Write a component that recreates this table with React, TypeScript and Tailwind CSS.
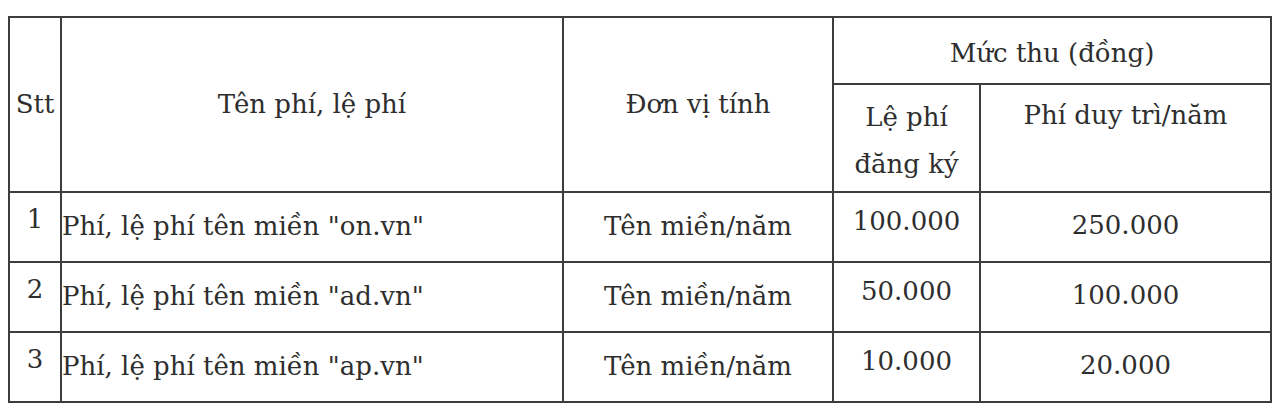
const rows = [
  { stt: '1', ten: 'Phí, lệ phí tên miền "on.vn"', dangKy: '100.000', duyTri: '250.000' },
  { stt: '2', ten: 'Phí, lệ phí tên miền "ad.vn"', dangKy: '50.000', duyTri: '100.000' },
  { stt: '3', ten: 'Phí, lệ phí tên miền "ap.vn"', dangKy: '10.000', duyTri: '20.000' },
]

const cell = 'border-2 border-[#3d3d3d] p-0'

export default function App() {
  return (
    <div
      className="min-h-[411px] bg-white pl-[8px] pt-[16px] text-[26px] leading-[47px] text-[#2e2e2e]"
      style={{ fontFamily: '"DejaVu Serif", serif' }}
    >
      <table className="w-[1264px] table-fixed border-collapse">
        <colgroup>
          <col className="w-[52px]" />
          <col className="w-[502px]" />
          <col className="w-[270px]" />
          <col className="w-[147px]" />
          <col className="w-[291px]" />
        </colgroup>
        <thead>
          <tr className="h-[67px]">
            <th rowSpan={2} className={`${cell} align-middle text-center font-normal`}>Stt</th>
            <th rowSpan={2} className={`${cell} align-middle text-center font-normal`}>Tên phí, lệ phí</th>
            <th rowSpan={2} className={`${cell} align-middle text-center font-normal`}>Đơn vị tính</th>
            <th colSpan={2} className={`${cell} align-top pt-[12px] text-center font-normal`}>Mức thu (đồng)</th>
          </tr>
          <tr className="h-[108px]">
            <th className={`${cell} align-top pt-[9px] text-center font-normal`}>
              Lệ phí
              <br />
              đăng ký
            </th>
            <th className={`${cell} align-top pt-[7px] text-center font-normal`}>Phí duy trì/năm</th>
          </tr>
        </thead>
        <tbody>
          {rows.map(r => (
            <tr key={r.stt} className="h-[70px]">
              <td className={`${cell} align-top pt-[3px] text-center`}>{r.stt}</td>
              <td className={`${cell} align-top pt-[10px] text-left`}>{r.ten}</td>
              <td className={`${cell} align-top pt-[10px] text-center`}>Tên miền/năm</td>
              <td className={`${cell} align-top pt-[5px] text-center`}>{r.dangKy}</td>
              <td className={`${cell} align-top pt-[9px] text-center`}>{r.duyTri}</td>
            </tr>
          ))}
        </tbody>
      </table>
    </div>
  )
}
